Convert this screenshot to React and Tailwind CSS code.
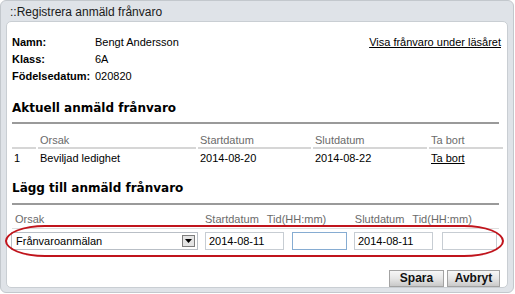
const rows = [
  { nr: '1', orsak: 'Beviljad ledighet', start: '2014-08-20', slut: '2014-08-22' },
]

const cols = 'grid grid-cols-[24px_158px_113px_114px_74px] gap-x-[2px]'

function Field({ label, value }) {
  return (
    <div className="flex h-[17px] items-center">
      <span className="w-[83px] font-bold">{label}</span>
      <span>{value}</span>
    </div>
  )
}

function Heading({ children, pb = 'pb-[6px]' }) {
  return (
    <div className={`border-b-2 border-[#9a9a9a] ${pb}`}>
      <h2 className="font-['DejaVu_Sans',Verdana,sans-serif] text-[12px] font-bold leading-[16px] text-black">
        {children}
      </h2>
    </div>
  )
}

export default function App() {
  return (
    <div className="h-[294px] w-[515px] bg-white font-['Liberation_Sans',Arial,sans-serif] text-[11px] text-black">
      <div className="flex h-[293px] w-[514px] flex-col rounded-[6px] border border-[#c3c8cd] bg-[#dfe3e8]">
        {/* Title */}
        <div className="h-[20px] pl-[9px] text-[12px] leading-[22px] text-[#1a1a1a]">::Registrera anmäld frånvaro</div>

        {/* Body */}
        <div className="relative mx-[5px] mb-[4px] flex-1 rounded-[5px] border border-[#c9ced3] bg-white px-[5px] pt-[12px]">
          <div className="flex justify-between pr-[1px]">
            <div>
              <Field label="Namn:" value="Bengt Andersson" />
              <Field label="Klass:" value="6A" />
              <Field label="Födelsedatum:" value="020820" />
            </div>
            <a href="#" className="h-[17px] leading-[17px] underline">Visa frånvaro under läsåret</a>
          </div>

          <div className="mt-[15px] mr-[3px]">
            <Heading>Aktuell anmäld frånvaro</Heading>
          </div>

          <div className={`${cols} mt-[9px] text-[#6b6b6b]`}>
            {['', 'Orsak', 'Startdatum', 'Slutdatum', 'Ta bort'].map((h, i) => (
              <div key={i} className="h-[16px] border-b-2 border-[#d6d6d6] pl-[2px] leading-[14px]">{h}</div>
            ))}
          </div>
          {rows.map((r) => (
            <div key={r.nr} className={`${cols} h-[18px] items-center`}>
              <div className="pl-[2px]">{r.nr}</div>
              <div className="pl-[2px]">{r.orsak}</div>
              <div className="pl-[2px]">{r.start}</div>
              <div className="pl-[2px]">{r.slut}</div>
              <div className="pl-[2px]"><a href="#" className="underline">Ta bort</a></div>
            </div>
          ))}

          <div className="mt-[13px] mr-[3px]">
            <Heading pb="pb-[7px]">Lägg till anmäld frånvaro</Heading>
          </div>

          {/* Labels */}
          <div className="mt-[6px] mr-[3px] flex h-[18px] items-center border-b border-[#dedede] text-[#6b6b6b]">
            <span className="ml-[3px] w-[190px]">Orsak</span>
            <span>Startdatum</span>
            <span className="ml-[8px] w-[88px]">Tid(HH:mm)</span>
            <span>Slutdatum</span>
            <span className="ml-[8px]">Tid(HH:mm)</span>
          </div>

          {/* Inputs */}
          <div className="mt-[3px] flex h-[18px] items-center">
            <div className="ml-[-1px] flex h-[18px] w-[187px] items-center justify-between border border-[#b9bfc6] bg-white pl-[4px] pr-[2px]">
              <span>Frånvaroanmälan</span>
              <span className="flex h-[12px] w-[13px] items-center justify-center border border-[#7d7d7d] bg-[#e4e4e4]">
                <svg width="7" height="4" viewBox="0 0 7 4"><path d="M0 0h7L3.5 4z" fill="#000" /></svg>
              </span>
            </div>
            <div className="ml-[7px] flex h-[18px] w-[79px] items-center border border-[#c7cdd3] pl-[3px]">2014-08-11</div>
            <div className="ml-[8px] h-[18px] w-[55px] border border-[#86acd2]" />
            <div className="ml-[7px] flex h-[18px] w-[79px] items-center border border-[#c7cdd3] pl-[3px]">2014-08-11</div>
            <div className="ml-[9px] h-[18px] w-[55px] border border-[#c7cdd3]" />
          </div>

          {/* Annotation ring */}
          <div className="pointer-events-none absolute left-[-2px] top-[203px] h-[32px] w-[499px] rounded-[40px/16px] border-2 border-[#c0141c]" />

          {/* Buttons */}
          <div className="mt-[20px] flex justify-end gap-[3px] pr-[2px]">
            <button className="h-[17px] w-[55px] border border-[#a3a3a3] bg-gradient-to-b from-[#f7f7f7] via-[#e6e6e6] to-[#c9c9c9] text-[12px] font-bold leading-[15px] text-[#111]">Spara</button>
            <button className="h-[17px] w-[53px] border border-[#a3a3a3] bg-gradient-to-b from-[#f7f7f7] via-[#e6e6e6] to-[#c9c9c9] text-[12px] font-bold leading-[15px] text-[#111]">Avbryt</button>
          </div>
        </div>
      </div>
    </div>
  )
}
